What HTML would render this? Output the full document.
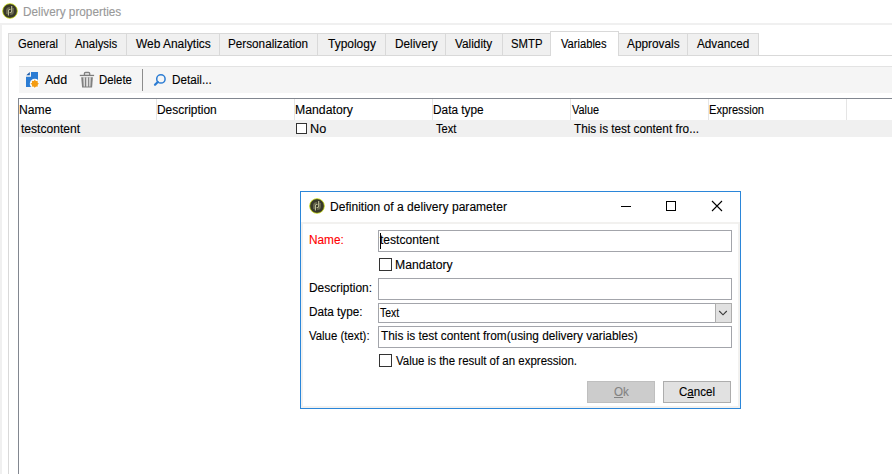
<!DOCTYPE html>
<html><head><meta charset="utf-8"><title>Delivery properties</title><style>
html,body{margin:0;padding:0;}
body{width:892px;height:474px;position:relative;overflow:hidden;background:#fff;font-family:"Liberation Sans",sans-serif;font-size:12px;color:#000;}
.a{position:absolute;}
.t{position:absolute;white-space:nowrap;line-height:14px;transform-origin:0 0;-webkit-text-stroke:0.12px currentColor;}
.t u{text-decoration:underline;text-underline-offset:1px;}
.inp{position:absolute;box-sizing:border-box;border:1px solid #a3a5ab;background:#fff;}
.cb{position:absolute;box-sizing:border-box;border:1px solid #333;background:#fff;}
</style></head><body>
<div class="a" style="left:0px;top:23px;width:892px;height:2px;background:#f0f0f0;"></div>
<div class="a" style="left:0px;top:23px;width:2px;height:451px;background:#f0f0f0;"></div>
<div class="a" style="left:8px;top:55px;width:884px;height:1px;background:#d9d9d9;"></div>
<div class="a" style="left:8px;top:55px;width:1px;height:419px;background:#d9d9d9;"></div>
<div class="a" style="left:8px;top:33px;width:751px;height:22px;background:#f0f0f0;border-top:1px solid #d9d9d9;box-sizing:border-box;"></div>
<div class="a" style="left:8px;top:33px;width:1px;height:22px;background:#d9d9d9;"></div>
<div class="a" style="left:65px;top:33px;width:1px;height:22px;background:#d9d9d9;"></div>
<div class="a" style="left:126px;top:33px;width:1px;height:22px;background:#d9d9d9;"></div>
<div class="a" style="left:219px;top:33px;width:1px;height:22px;background:#d9d9d9;"></div>
<div class="a" style="left:317px;top:33px;width:1px;height:22px;background:#d9d9d9;"></div>
<div class="a" style="left:385px;top:33px;width:1px;height:22px;background:#d9d9d9;"></div>
<div class="a" style="left:445px;top:33px;width:1px;height:22px;background:#d9d9d9;"></div>
<div class="a" style="left:502px;top:33px;width:1px;height:22px;background:#d9d9d9;"></div>
<div class="a" style="left:550px;top:33px;width:1px;height:22px;background:#d9d9d9;"></div>
<div class="a" style="left:618px;top:33px;width:1px;height:22px;background:#d9d9d9;"></div>
<div class="a" style="left:687px;top:33px;width:1px;height:22px;background:#d9d9d9;"></div>
<div class="a" style="left:758px;top:33px;width:1px;height:22px;background:#d9d9d9;"></div>
<div class="a" style="left:550px;top:31px;width:69px;height:25px;background:#fff;border:1px solid #d9d9d9;border-bottom:none;box-sizing:border-box;"></div>
<div class="a" style="left:19px;top:66px;width:873px;height:27px;background:#f5f5f5;border-top:1px solid #e3e3e3;box-sizing:border-box;"></div>
<div class="a" style="left:142px;top:69px;width:1px;height:22px;background:#8c8c8c;"></div>
<div class="a" style="left:18px;top:98px;width:874px;height:1px;background:#828790;"></div>
<div class="a" style="left:18px;top:98px;width:1px;height:376px;background:#828790;"></div>
<div class="a" style="left:156px;top:99px;width:1px;height:21px;background:#e5e5e5;"></div>
<div class="a" style="left:294px;top:99px;width:1px;height:21px;background:#e5e5e5;"></div>
<div class="a" style="left:432px;top:99px;width:1px;height:21px;background:#e5e5e5;"></div>
<div class="a" style="left:570px;top:99px;width:1px;height:21px;background:#e5e5e5;"></div>
<div class="a" style="left:708px;top:99px;width:1px;height:21px;background:#e5e5e5;"></div>
<div class="a" style="left:846px;top:99px;width:1px;height:21px;background:#e5e5e5;"></div>
<div class="a" style="left:19px;top:120px;width:873px;height:17px;background:#f0f0f0;"></div>
<div class="a" style="left:296px;top:123px;width:11px;height:11px;background:#fff;border:1px solid #333;box-sizing:border-box;"></div>
<svg class="a" style="left:2px;top:3px" width="16" height="16" viewBox="0 0 16 16"><circle cx="8" cy="8" r="7.35" fill="#38382a" stroke="#cde012" stroke-width="0.8"/><path d="M4.9 11V7.6Q4.9 4.9 7.9 4.9" fill="none" stroke="#6b6b52" stroke-width="1.6"/><path d="M11.1 5V8.400Q11.100 11.100 8.100 11.100" fill="none" stroke="#6b6b52" stroke-width="1.600"/><path d="M6.400 12.600V7.700Q6.400 6.300 8.600 6.300" fill="none" stroke="#c3c39c" stroke-width="1.100"/><path d="M9.700 3.100V8.300Q9.700 9.700 7.500 9.700" fill="none" stroke="#c3c39c" stroke-width="1.100"/></svg>
<svg class="a" style="left:25px;top:71px" width="16" height="18" viewBox="0 0 16 18"><path d="M6 1H13V16H1V5.700H6Z" fill="#2b7cd3"/><path d="M1.300 4.200H4.800V0.900Z" fill="#1a5aa8"/><circle cx="9.8" cy="12.7" r="5" fill="#fbfbfb"/><polygon points="9.80,8.40 10.83,10.21 12.84,9.66 12.29,11.67 14.10,12.70 12.29,13.73 12.84,15.74 10.83,15.19 9.80,17.00 8.77,15.19 6.76,15.74 7.31,13.73 5.50,12.70 7.31,11.67 6.76,9.66 8.77,10.21" fill="#f39c12"/><circle cx="9.8" cy="12.7" r="3" fill="#f39c12"/></svg>
<svg class="a" style="left:79px;top:71px" width="16" height="18" viewBox="0 0 16 18"><path d="M5.4 4.2V2.400Q5.400 1.400 6.500 1.400H9.600Q10.700 1.400 10.700 2.400V4.200" fill="#dcdcdc" stroke="#808080" stroke-width="1.300"/><rect x="0.800" y="3.800" width="14.300" height="1.300" fill="#7c7c7c"/><path d="M2.200 6.200H13.900L13.100 16.600H3.100Z" fill="#808080"/><path d="M4.300 6.200H5.900V15.400H4.700Z M7.200 6.200H9.100V15.400H7.200Z M10.200 6.200H11.800L11.400 15.400H10.200Z" fill="#e2e2e2"/></svg>
<svg class="a" style="left:152px;top:72px" width="16" height="16" viewBox="0 0 16 16"><circle cx="8.900" cy="6.900" r="4.200" fill="none" stroke="#2b7cd3" stroke-width="1.500"/><path d="M5.800 10L3 12.800" stroke="#2b7cd3" stroke-width="2.200" stroke-linecap="round"/></svg>
<div class="a" style="left:300px;top:191px;width:441px;height:218px;box-sizing:border-box;border:1px solid #2b86d9;background:#f2f1ef;"></div>
<div class="a" style="left:301px;top:192px;width:439px;height:30px;background:#fff;"></div>
<div class="a" style="left:303px;top:224px;width:435px;height:182px;background:#fff;"></div>
<svg class="a" style="left:309px;top:198px" width="16" height="16" viewBox="0 0 16 16"><circle cx="8" cy="8" r="7.35" fill="#38382a" stroke="#cde012" stroke-width="0.8"/><path d="M4.9 11V7.6Q4.9 4.9 7.9 4.9" fill="none" stroke="#6b6b52" stroke-width="1.6"/><path d="M11.1 5V8.400Q11.100 11.100 8.100 11.100" fill="none" stroke="#6b6b52" stroke-width="1.600"/><path d="M6.400 12.600V7.700Q6.400 6.300 8.600 6.300" fill="none" stroke="#c3c39c" stroke-width="1.100"/><path d="M9.700 3.100V8.300Q9.700 9.700 7.500 9.700" fill="none" stroke="#c3c39c" stroke-width="1.100"/></svg>
<div class="a" style="left:621px;top:206px;width:10px;height:1px;background:#000;"></div>
<div class="a" style="left:666px;top:201px;width:10px;height:10px;box-sizing:border-box;border:1px solid #000;"></div>
<svg class="a" style="left:711px;top:200px" width="12" height="12" viewBox="0 0 12 12"><path d="M1 1L11 11M11 1L1 11" stroke="#000" stroke-width="1.100"/></svg>
<div class="inp" style="left:378px;top:230px;width:354px;height:22px;"></div>
<div class="inp" style="left:378px;top:278px;width:354px;height:22px;"></div>
<div class="inp" style="left:378px;top:303px;width:354px;height:20px;"></div>
<div class="inp" style="left:378px;top:326px;width:354px;height:22px;"></div>
<div class="a" style="left:380px;top:233px;width:1px;height:16px;background:#000;"></div>
<div class="a" style="left:715px;top:303px;width:17px;height:20px;box-sizing:border-box;border:1px solid #adadad;background:#e1e1e1;"></div>
<svg class="a" style="left:718px;top:308px" width="11" height="9" viewBox="0 0 11 9"><path d="M1.200 3L5 6.800L8.800 3" fill="none" stroke="#3a3a3a" stroke-width="1.1"/></svg>
<div class="cb" style="left:379px;top:258px;width:13px;height:13px;"></div>
<div class="cb" style="left:379px;top:354px;width:13px;height:13px;"></div>
<div class="a" style="left:587px;top:381px;width:68px;height:22px;box-sizing:border-box;border:1px solid #bfbfbf;background:#cccccc;"></div>
<div class="a" style="left:663px;top:381px;width:68px;height:22px;box-sizing:border-box;border:1px solid #adadad;background:#e1e1e1;"></div>
<span class="t" id="title" style="left:22.52px;top:4.80px;color:#999;font-size:12px;transform:scaleX(0.9818);">Delivery properties</span>
<span class="t" id="tab0" style="left:17.50px;top:36.80px;color:#000;font-size:12px;transform:scaleX(0.9357);">General</span>
<span class="t" id="tab1" style="left:75.30px;top:36.80px;color:#000;font-size:12px;transform:scaleX(0.9444);">Analysis</span>
<span class="t" id="tab2" style="left:136.00px;top:36.80px;color:#000;font-size:12px;transform:scaleX(0.9947);">Web Analytics</span>
<span class="t" id="tab3" style="left:228.42px;top:36.80px;color:#000;font-size:12px;transform:scaleX(0.9765);">Personalization</span>
<span class="t" id="tab4" style="left:327.80px;top:36.80px;color:#000;font-size:12px;transform:scaleX(0.9979);">Typology</span>
<span class="t" id="tab5" style="left:394.62px;top:36.80px;color:#000;font-size:12px;transform:scaleX(0.9810);">Delivery</span>
<span class="t" id="tab6" style="left:455.30px;top:36.80px;color:#000;font-size:12px;transform:scaleX(0.9842);">Validity</span>
<span class="t" id="tab7" style="left:511.36px;top:36.80px;color:#000;font-size:12px;transform:scaleX(0.9438);">SMTP</span>
<span class="t" id="tab8" style="left:561.30px;top:36.80px;color:#000;font-size:12px;transform:scaleX(0.9286);">Variables</span>
<span class="t" id="tab9" style="left:626.60px;top:36.80px;color:#000;font-size:12px;transform:scaleX(0.9849);">Approvals</span>
<span class="t" id="tab10" style="left:697.40px;top:36.80px;color:#000;font-size:12px;transform:scaleX(0.9792);">Advanced</span>
<span class="t" id="add" style="left:45.00px;top:72.80px;color:#000;font-size:12px;transform:scaleX(1.0381);">Add</span>
<span class="t" id="del" style="left:98.95px;top:72.80px;color:#000;font-size:12px;transform:scaleX(0.9500);">Delete</span>
<span class="t" id="det" style="left:171.53px;top:72.80px;color:#000;font-size:12px;transform:scaleX(0.9744);">Detail...</span>
<span class="t" id="h0" style="left:18.69px;top:102.50px;color:#000;font-size:12px;transform:scaleX(1.0129);">Name</span>
<span class="t" id="h1" style="left:156.81px;top:102.50px;color:#000;font-size:12px;transform:scaleX(0.9949);">Description</span>
<span class="t" id="h2" style="left:294.68px;top:102.50px;color:#000;font-size:12px;transform:scaleX(1.0214);">Mandatory</span>
<span class="t" id="h3" style="left:432.91px;top:102.50px;color:#000;font-size:12px;transform:scaleX(0.9860);">Data type</span>
<span class="t" id="h4" style="left:571.80px;top:102.50px;color:#000;font-size:12px;transform:scaleX(0.9067);">Value</span>
<span class="t" id="h5" style="left:708.77px;top:102.50px;color:#000;font-size:12px;transform:scaleX(0.9276);">Expression</span>
<span class="t" id="r0" style="left:21.30px;top:122.40px;color:#000;font-size:12px;transform:scaleX(1.0068);">testcontent</span>
<span class="t" id="r1" style="left:309.64px;top:122.40px;color:#000;font-size:12px;transform:scaleX(1.0571);">No</span>
<span class="t" id="r2" style="left:436.10px;top:122.40px;color:#000;font-size:12px;transform:scaleX(0.9273);">Text</span>
<span class="t" id="r3" style="left:574.00px;top:122.40px;color:#000;font-size:12px;transform:scaleX(0.9811);">This is test content fro...</span>
<span class="t" id="dt" style="left:329.60px;top:200.40px;color:#000;font-size:12px;transform:scaleX(1.0046);">Definition of a delivery parameter</span>
<span class="t" id="l0" style="left:308.81px;top:232.80px;color:#ff0000;font-size:12px;transform:scaleX(0.9853);">Name:</span>
<span class="t" id="i0" style="left:380.20px;top:232.80px;color:#000;font-size:12px;transform:scaleX(1.0068);">testcontent</span>
<span class="t" id="c0" style="left:394.98px;top:258.40px;color:#000;font-size:12px;transform:scaleX(1.0179);">Mandatory</span>
<span class="t" id="l1" style="left:308.60px;top:281.00px;color:#000;font-size:12px;transform:scaleX(0.9952);">Description:</span>
<span class="t" id="l2" style="left:308.62px;top:305.40px;color:#000;font-size:12px;transform:scaleX(0.9792);">Data type:</span>
<span class="t" id="i2" style="left:380.30px;top:305.80px;color:#000;font-size:12px;transform:scaleX(0.8727);">Text</span>
<span class="t" id="l3" style="left:309.40px;top:329.00px;color:#000;font-size:12px;transform:scaleX(0.9492);">Value (text):</span>
<span class="t" id="i3" style="left:380.80px;top:329.00px;color:#000;font-size:12px;transform:scaleX(0.9865);">This is test content from(using delivery variables)</span>
<span class="t" id="c1" style="left:395.60px;top:353.80px;color:#000;font-size:12px;transform:scaleX(0.9566);">Value is the result of an expression.</span>
<span class="t" id="ok" style="left:613.60px;top:384.80px;color:#838383;font-size:12px;transform:scaleX(0.9667);"><u>O</u>k</span>
<span class="t" id="ca" style="left:679.30px;top:384.80px;color:#000;font-size:12px;transform:scaleX(0.9622);">C<u>a</u>ncel</span>
</body></html>
